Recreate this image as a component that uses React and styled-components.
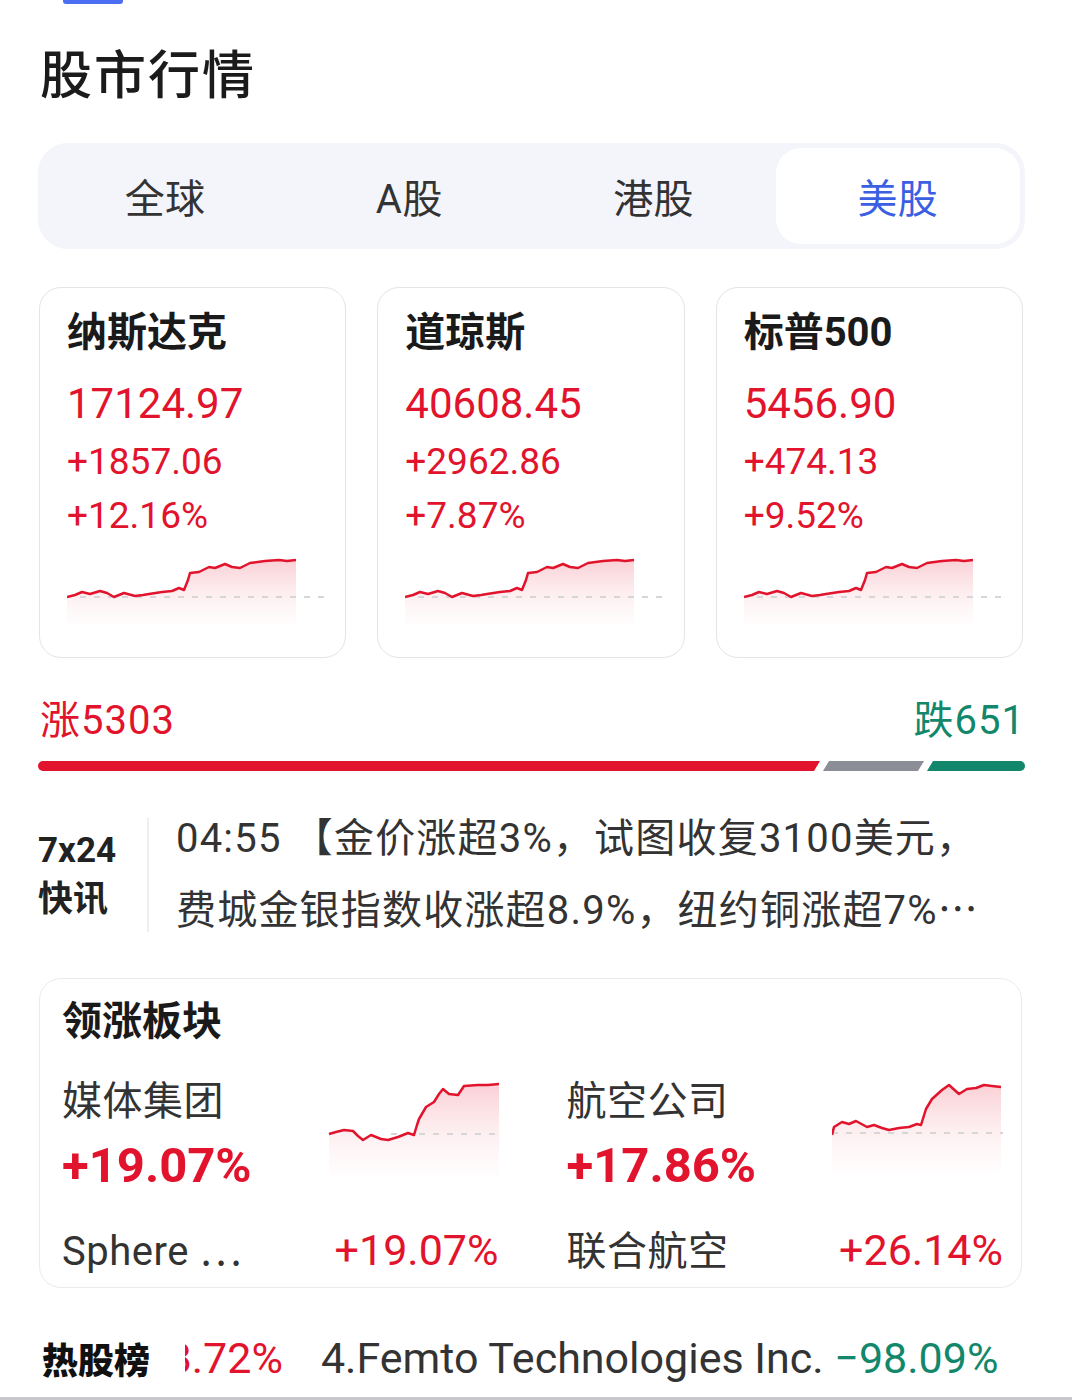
import React from 'react';
import styled, { createGlobalStyle } from 'styled-components';

const RED = '#e2132c';
const GREEN = '#12876b';
const FONT = `Roboto, "Noto Sans CJK SC", "Noto Sans", sans-serif`;

const Global = createGlobalStyle`
  html, body { margin: 0; padding: 0; background: #fff; }
  body { font-family: ${FONT}; color: #222; }
  * { box-sizing: border-box; }
`;

const Page = styled.div`
  width: 1072px;
  height: 1400px;
  overflow: hidden;
  background: #fff;
  display: flex;
  flex-direction: column;
`;

const TabIndicator = styled.div`
  margin-left: 63px;
  width: 60px;
  height: 4px;
  background: #4b6ef5;
  border-radius: 0 0 3px 3px;
`;

const Title = styled.h1`
  margin: 44px 0 0 40px;
  font-size: 52px;
  line-height: 58px;
  font-weight: 500;
  color: #1b1b1b;
  letter-spacing: 2px;
`;

const Segmented = styled.div`
  margin: 37px 0 0 38px;
  width: 987px;
  height: 106px;
  padding: 5px;
  background: #f4f4fb;
  border-radius: 30px;
  display: grid;
  grid-template-columns: repeat(4, 1fr);
`;

const Seg = styled.div`
  display: flex;
  align-items: center;
  justify-content: center;
  font-size: 40px;
  letter-spacing: 0.5px;
  color: ${(p) => (p.$active ? '#3b5fe3' : '#333')};
  background: ${(p) => (p.$active ? '#fff' : 'transparent')};
  border-radius: 25px;
`;

const Cards = styled.div`
  margin: 38px 0 0 39px;
  width: 984px;
  display: grid;
  grid-template-columns: repeat(3, 1fr);
  gap: 31px;
`;

const IndexCard = styled.div`
  height: 371px;
  border: 1.5px solid #e4e4e9;
  border-radius: 22px;
  padding: 25px 0 0 27px;
  display: flex;
  flex-direction: column;
`;

const CardName = styled.div`
  font-size: 40px;
  line-height: 40px;
  font-weight: 700;
  color: #1a1a1a;
`;

const Price = styled.div`
  margin-top: 30px;
  font-size: 42px;
  line-height: 42px;
  color: ${RED};
`;

const Change = styled.div`
  margin-top: ${(p) => p.$gap}px;
  font-size: 37px;
  line-height: 38px;
  color: ${RED};
`;

const ChartBox = styled.div`
  margin-top: 20px;
  display: flex;
`;

const Breadth = styled.div`
  margin: 43px 47px 0 40px;
  display: flex;
  justify-content: space-between;
  font-size: 40px;
  line-height: 40px;
  letter-spacing: 1px;
`;

const BreadthLabel = styled.span`
  color: ${(p) => p.$color};
`;

const Bar = styled.div`
  margin: 20px 47px 0 38px;
  height: 10px;
  display: flex;
  gap: 3px;
`;

const BarSeg = styled.div`
  flex: ${(p) => p.$grow} 1 0;
  background: ${(p) => p.$color};
  border-radius: ${(p) => p.$radius};
  clip-path: ${(p) => p.$clip};
`;

const News = styled.div`
  margin: 47px 0 0 38px;
  height: 114px;
  display: flex;
  align-items: center;
`;

const NewsLabel = styled.div`
  width: 109px;
  font-size: 35px;
  line-height: 49px;
  font-weight: 700;
  color: #222;
`;

const Divider = styled.div`
  align-self: stretch;
  width: 2px;
  background: #eeeef0;
`;

const NewsText = styled.div`
  margin-left: 27px;
  font-size: 40px;
  line-height: 68px;
  letter-spacing: 1.2px;
  color: #333;
`;

const NewsLine = styled.div`
  white-space: nowrap;
`;

const Ellipsis = styled.span`
  font-family: "Noto Sans CJK SC", sans-serif;
  letter-spacing: 0;
`;

const SectorCard = styled.section`
  margin: 46px 0 0 39px;
  width: 983px;
  height: 310px;
  border: 1.5px solid #ebebef;
  border-radius: 22px;
  padding: 21px 18px 0 22px;
`;

const SectorHeading = styled.div`
  font-size: 40px;
  line-height: 44px;
  font-weight: 700;
  color: #1a1a1a;
`;

const SectorGrid = styled.div`
  margin-top: 36px;
  display: grid;
  grid-template-columns: 1fr 1fr;
  column-gap: 68px;
`;

const Sector = styled.div`
  display: grid;
  grid-template-columns: 1fr 171px;
  grid-template-rows: 44px 66px 84px;
  align-items: start;
`;

const SectorName = styled.div`
  font-size: 40px;
  line-height: 44px;
  letter-spacing: 0.5px;
  color: #333;
`;

const SectorPct = styled.div`
  grid-column: 1;
  margin-top: 18px;
  font-size: 49px;
  line-height: 48px;
  font-weight: 700;
  color: ${RED};
`;

const SectorChart = styled.div`
  grid-column: 2;
  grid-row: 1 / span 2;
  display: flex;
`;

const LeaderRow = styled.div`
  grid-column: 1 / span 2;
  align-self: end;
  display: flex;
  justify-content: space-between;
  align-items: baseline;
  font-size: 40px;
  line-height: 44px;
`;

const LeaderName = styled.span`
  color: #333;
  letter-spacing: 0.5px;
`;

const LeaderPct = styled.span`
  font-size: 43px;
  color: ${RED};
`;

const HotRow = styled.div`
  margin: 42px 0 0 42px;
  height: 56px;
  display: flex;
  align-items: center;
`;

const HotLabel = styled.div`
  width: 143px;
  flex: none;
  font-size: 36px;
  font-weight: 900;
  color: #111;
`;

const Ticker = styled.div`
  width: 822px;
  overflow: hidden;
  display: flex;
  align-items: center;
  white-space: nowrap;
  font-size: 43px;
  line-height: 56px;
`;

const TickerTrack = styled.div`
  display: flex;
  gap: 38px;
  margin-left: ${(p) => p.$offset}px;
`;

const TickerItem = styled.span`
  color: #333;
`;

const TickerPct = styled.span`
  color: ${(p) => (p.$up ? RED : GREEN)};
`;

const BottomRule = styled.div`
  margin-top: auto;
  height: 3px;
  background: #c8c8cc;
`;

function Sparkline({ id, points, width, height, base, dashFrom, fillTo }) {
  const line = points.map((p, i) => `${i ? 'L' : 'M'}${p[0]},${p[1]}`).join(' ');
  const first = points[0];
  const last = points[points.length - 1];
  const area = `${line} L${last[0]},${fillTo} L${first[0]},${fillTo} Z`;
  return (
    <svg width={width} height={height} viewBox={`0 0 ${width} ${height}`}>
      <defs>
        <linearGradient id={id} x1="0" y1="0" x2="0" y2="1">
          <stop offset="0" stopColor="#f6b0b9" stopOpacity="0.6" />
          <stop offset="1" stopColor="#fde8ea" stopOpacity="0.1" />
        </linearGradient>
      </defs>
      <path d={area} fill={`url(#${id})`} />
      <line x1={dashFrom} y1={base} x2={width} y2={base} stroke="#d6d6da" strokeWidth="2" strokeDasharray="6 8" />
      <path d={line} fill="none" stroke={RED} strokeWidth="2.5" strokeLinejoin="round" />
    </svg>
  );
}

const indexPts = [
  [0, 42], [8, 40], [15, 37], [23, 39], [33, 36], [40, 38], [47, 42], [57, 38], [68, 41], [76, 40], [82, 39],
  [95, 37], [105, 36], [112, 33], [117, 35], [121, 25], [123, 18], [132, 17], [142, 12], [148, 13], [158, 9],
  [165, 12], [173, 13], [183, 8], [198, 6], [212, 5], [220, 6], [229, 5],
];

const mediaPts = [
  [1, 54], [8, 52], [16, 50], [25, 51], [30, 56], [35, 60], [43, 55], [53, 59], [60, 60], [70, 57], [80, 53],
  [86, 55], [89, 45], [91, 39], [98, 27], [106, 22], [111, 14], [115, 9], [121, 14], [130, 15], [136, 6],
  [150, 5], [160, 5], [171, 4],
];

const airPts = [
  [0, 55], [2, 47], [10, 42], [17, 44], [24, 41], [35, 47], [42, 45], [50, 48], [57, 50], [67, 48], [77, 47],
  [85, 44], [89, 45], [94, 29], [100, 19], [110, 10], [117, 5], [127, 14], [135, 9], [144, 8], [152, 5],
  [160, 6], [169, 7],
];

const indices = [
  { name: '纳斯达克', price: '17124.97', chg: '+1857.06', pct: '+12.16%' },
  { name: '道琼斯', price: '40608.45', chg: '+2962.86', pct: '+7.87%' },
  { name: '标普500', price: '5456.90', chg: '+474.13', pct: '+9.52%' },
];

const sectors = [
  { name: '媒体集团', pct: '+19.07%', leader: 'Sphere ', more: true, leaderPct: '+19.07%', pts: mediaPts, base: 54, dash: 63, fill: 97 },
  { name: '航空公司', pct: '+17.86%', leader: '联合航空', more: false, leaderPct: '+26.14%', pts: airPts, base: 53, dash: 0, fill: 92 },
];

export default function App() {
  return (
    <Page>
      <Global />
      <TabIndicator />
      <Title>股市行情</Title>
      <Segmented>
        <Seg>全球</Seg>
        <Seg>A股</Seg>
        <Seg>港股</Seg>
        <Seg $active>美股</Seg>
      </Segmented>

      <Cards>
        {indices.map((d, i) => (
          <IndexCard key={d.name}>
            <CardName>{d.name}</CardName>
            <Price>{d.price}</Price>
            <Change $gap={18}>{d.chg}</Change>
            <Change $gap={16}>{d.pct}</Change>
            <ChartBox>
              <Sparkline id={`ix${i}`} points={indexPts} width={257} height={70} base={42} dashFrom={13} fillTo={70} />
            </ChartBox>
          </IndexCard>
        ))}
      </Cards>

      <Breadth>
        <BreadthLabel $color={RED}>涨5303</BreadthLabel>
        <BreadthLabel $color={GREEN}>跌651</BreadthLabel>
      </Breadth>
      <Bar>
        <BarSeg $grow={782} $color={RED} $radius="5px 0 0 5px" $clip="polygon(0 0, 100% 0, calc(100% - 6px) 100%, 0 100%)" />
        <BarSeg $grow={101} $color="#8b8e97" $radius="0" $clip="polygon(6px 0, 100% 0, calc(100% - 6px) 100%, 0 100%)" />
        <BarSeg $grow={98} $color={GREEN} $radius="0 5px 5px 0" $clip="polygon(6px 0, 100% 0, 100% 100%, 0 100%)" />
      </Bar>

      <News>
        <NewsLabel>
          7x24
          <br />
          快讯
        </NewsLabel>
        <Divider />
        <NewsText>
          <NewsLine>04:55 【金价涨超3%，试图收复3100美元，</NewsLine>
          <NewsLine>
            费城金银指数收涨超8.9%，纽约铜涨超7%<Ellipsis>…</Ellipsis>
          </NewsLine>
        </NewsText>
      </News>

      <SectorCard>
        <SectorHeading>领涨板块</SectorHeading>
        <SectorGrid>
          {sectors.map((s, i) => (
            <Sector key={s.name}>
              <SectorName>{s.name}</SectorName>
              <SectorChart>
                <Sparkline id={`sc${i}`} points={s.pts} width={171} height={97} base={s.base} dashFrom={s.dash} fillTo={s.fill} />
              </SectorChart>
              <SectorPct>{s.pct}</SectorPct>
              <LeaderRow>
                <LeaderName>
                  {s.leader}
                  {s.more && <Ellipsis>…</Ellipsis>}
                </LeaderName>
                <LeaderPct>{s.leaderPct}</LeaderPct>
              </LeaderRow>
            </Sector>
          ))}
        </SectorGrid>
      </SectorCard>

      <HotRow>
        <HotLabel>热股榜</HotLabel>
        <Ticker>
          <TickerTrack $offset={-66}>
            <TickerPct $up>+18.72%</TickerPct>
            <TickerItem>
              4.Femto Technologies Inc. <TickerPct>−98.09%</TickerPct>
            </TickerItem>
          </TickerTrack>
        </Ticker>
      </HotRow>
      <BottomRule />
    </Page>
  );
}
